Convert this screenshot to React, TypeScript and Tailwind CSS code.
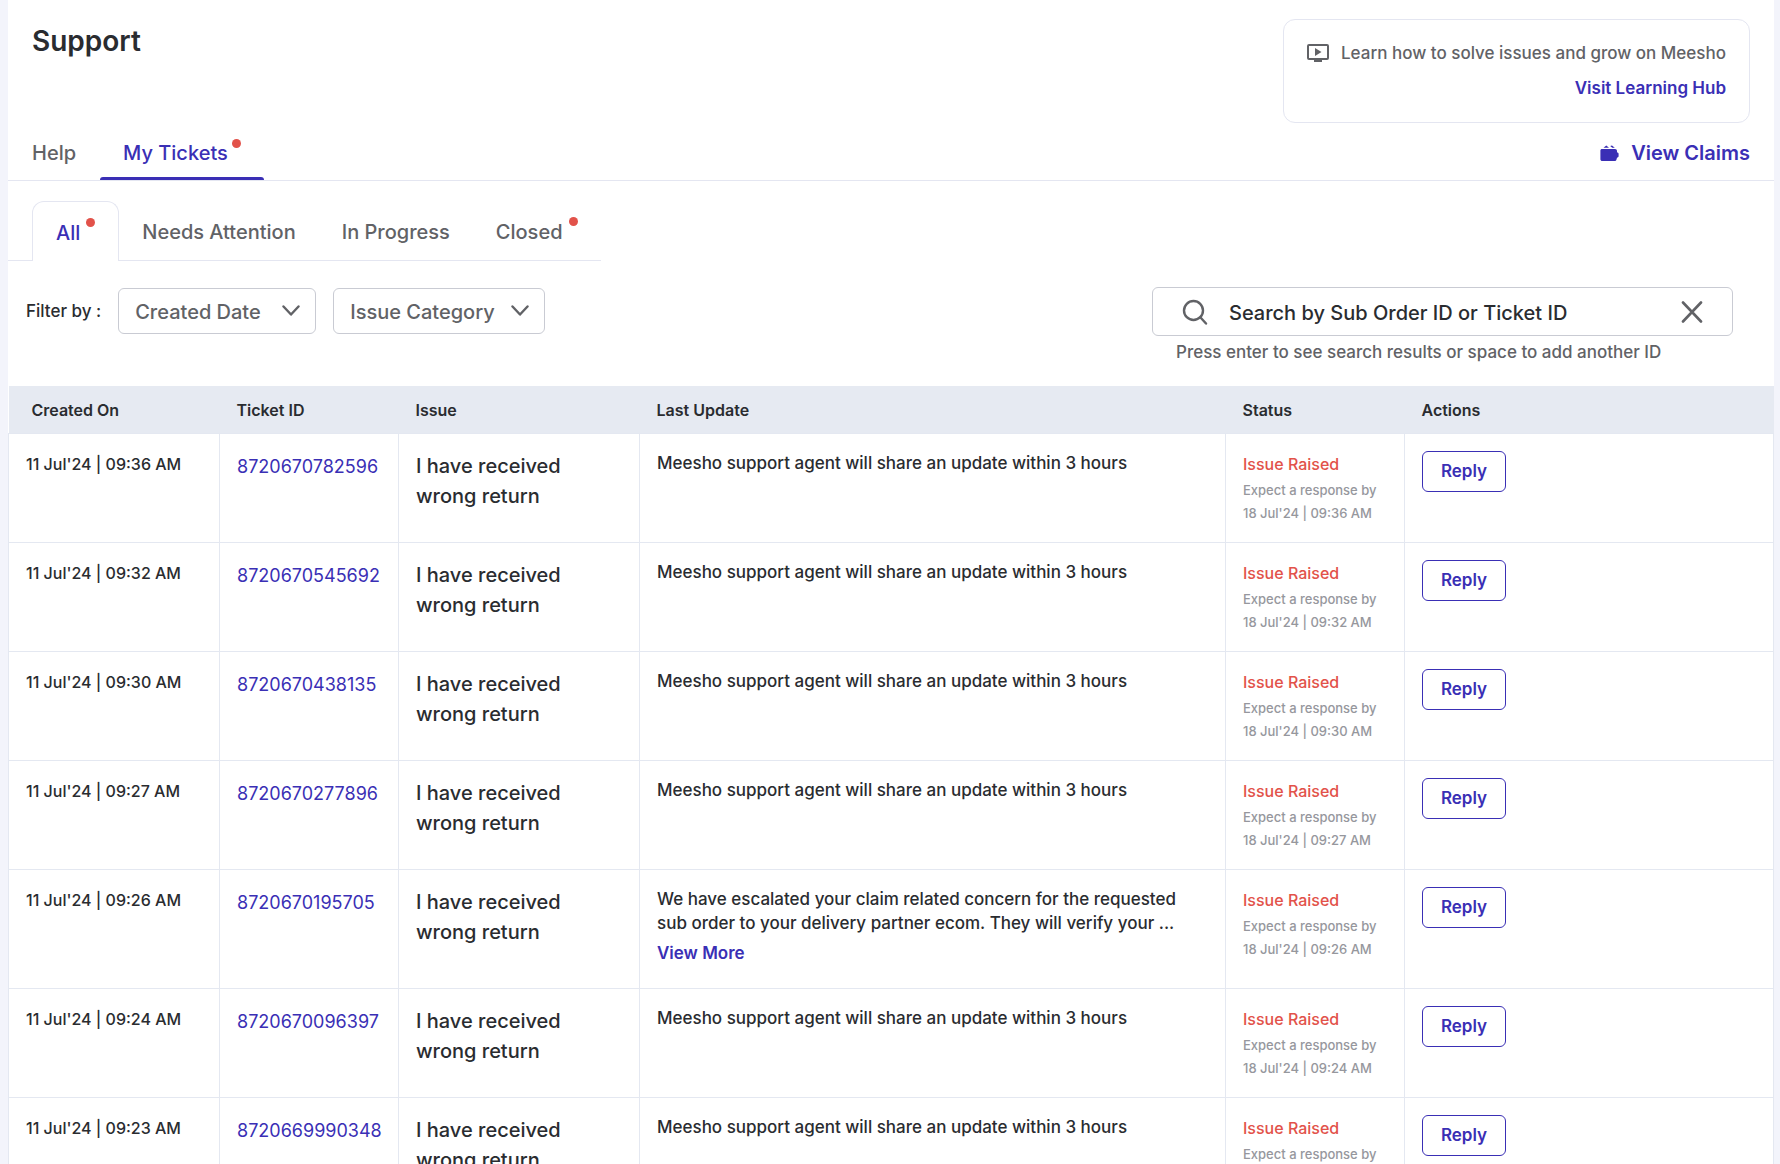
import { useState } from "react";
import clsx from "clsx";

interface Ticket {
  id: string;
  time: string;
  update?: string;
}

const tickets: Ticket[] = [
  { id: "8720670782596", time: "09:36 AM" },
  { id: "8720670545692", time: "09:32 AM" },
  { id: "8720670438135", time: "09:30 AM" },
  { id: "8720670277896", time: "09:27 AM" },
  {
    id: "8720670195705",
    time: "09:26 AM",
    update:
      "We have escalated your claim related concern for the requested sub order to your delivery partner ecom. They will verify your ...",
  },
  { id: "8720670096397", time: "09:24 AM" },
  { id: "8720669990348", time: "09:23 AM" },
];

const subTabs = [
  { label: "All", dot: true },
  { label: "Needs Attention", dot: false },
  { label: "In Progress", dot: false },
  { label: "Closed", dot: true },
];

const columns = ["Created On", "Ticket ID", "Issue", "Last Update", "Status", "Actions"];

function Dot() {
  return <span className="mb-5 h-[9px] w-[9px] rounded-full bg-[#e2524a]" />;
}

function VideoIcon() {
  return (
    <svg width="22" height="18" viewBox="0 0 22 18" fill="none" aria-hidden="true">
      <rect x="1" y="1" width="20" height="14" rx="1" stroke="#616266" strokeWidth="2" />
      <path d="M7 15.5h8V18H7z" fill="#616266" />
      <path d="M8 4v8l6.5-4z" fill="#616266" />
    </svg>
  );
}

function WalletIcon() {
  return (
    <svg width="19" height="17" viewBox="0 0 19 17" fill="#3a2fb5" aria-hidden="true">
      <path d="M3.5 2.8L6.3.5 9 2.8zM10.2 1.1L12 .5l2.8 2.3h-2.6z" />
      <path d="M2 4h13c1.200 0 2 .8 2 2v1.200l1 .5c.4.2.6.5.6 1v2.6c0 .5-.2.8-.6 1l-1 .5-.5 1.600c-.3 1.100-1 1.600-2 1.600H2.300C1.200 16 .4 15.300.4 14.200V5.600C.4 4.600 1 4 2 4z" />
    </svg>
  );
}

function FilterSelect({ label, className }: { label: string; className: string }) {
  return (
    <div className={clsx("relative", className)}>
      <select
        aria-label={label}
        className="h-[46px] w-full appearance-none rounded-md border border-[#c9cbd3] bg-white pl-4 pr-10 pt-0.5 text-[20px] font-medium text-[#616266]"
      >
        <option>{label}</option>
      </select>
      <svg
        className="pointer-events-none absolute right-4 top-[17px]"
        width="18"
        height="12"
        viewBox="0 0 18 12"
        fill="none"
        stroke="#616266"
        strokeWidth="2.4"
        strokeLinecap="round"
        strokeLinejoin="round"
        aria-hidden="true"
      >
        <path d="M1.5 1.5L9 9.5l7.5-8" />
      </svg>
    </div>
  );
}

export default function App() {
  const [subTab, setSubTab] = useState("All");
  const [query, setQuery] = useState("");

  return (
    <div className="min-h-screen bg-[#f3f4fb] pl-2 pr-1.5 font-['Inter',sans-serif] font-medium text-[#2a2c30]">
      <main className="min-h-screen bg-white">
        <header className="flex items-start justify-between px-6 pt-[19px]">
          <h1 className="mt-1 text-[28px] font-semibold leading-9">Support</h1>
          <section className="rounded-xl border border-[#e4e6f1] px-[23px] py-4">
            <p className="flex items-center gap-3 text-[17px] leading-[34px] text-[#616266]">
              <VideoIcon />
              Learn how to solve issues and grow on Meesho
            </p>
            <a href="#" className="block text-right text-[17px] font-semibold leading-9 text-[#3a2fb5]">
              Visit Learning Hub
            </a>
          </section>
        </header>

        <nav className="flex items-stretch justify-between border-b border-[#e4e6f1] pr-6">
          <div className="flex text-[20px]">
            <a href="#" className="flex h-[57px] items-center px-6 pt-[3px] text-[#616266]">
              Help
            </a>
            <a href="#" className="relative flex h-[57px] items-center gap-1 px-[23px] pt-[3px] text-[#3a2fb5]">
              My Tickets
              <Dot />
              <span className="absolute inset-x-0 bottom-0 h-[3px] rounded-t bg-[#3a2fb5]" />
            </a>
          </div>
          <a href="#" className="flex items-center gap-3 pt-[3px] text-[20px] font-semibold text-[#3a2fb5]">
            <WalletIcon />
            View Claims
          </a>
        </nav>

        <div className="mt-5 flex text-[20px]" role="tablist">
          <span className="w-6 border-b border-[#e4e6f1]" />
          {subTabs.map((tab) => (
            <button
              key={tab.label}
              type="button"
              role="tab"
              aria-selected={subTab === tab.label}
              onClick={() => setSubTab(tab.label)}
              className={clsx(
                "flex h-[60px] items-center gap-1.5 border-[#e4e6f1] px-[23px] pt-0.5",
                subTab === tab.label ? "rounded-t-xl border-x border-t text-[#3a2fb5]" : "border-b text-[#616266]"
              )}
            >
              {tab.label}
              {tab.dot && <Dot />}
            </button>
          ))}
        </div>

        <div className="mt-[26px] flex items-start justify-between pl-[18px] pr-[41px]">
          <div className="mt-px flex items-center gap-[17px]">
            <span className="pt-0.5 text-[17px]">Filter by :</span>
            <FilterSelect label="Created Date" className="w-[198px]" />
            <FilterSelect label="Issue Category" className="w-[212px]" />
          </div>
          <div className="w-[581px]">
            <div className="flex h-[49px] items-center rounded-md border border-[#c9cbd3] px-[29px]">
              <svg
                width="26"
                height="26"
                viewBox="0 0 26 26"
                fill="none"
                stroke="#616266"
                strokeWidth="2.4"
                strokeLinecap="round"
                aria-hidden="true"
              >
                <circle cx="11.5" cy="11.5" r="9.5" />
                <path d="M18.3 18.3L24 24.5" />
              </svg>
              <input
                id="ticket-search"
                placeholder="Search by Sub Order ID or Ticket ID"
                value={query}
                onChange={(e) => setQuery(e.target.value)}
                className="ml-[21px] min-w-0 flex-1 pt-0.5 text-[20px] outline-none placeholder:text-[#2a2c30]"
              />
              <button type="button" aria-label="Clear search" onClick={() => setQuery("")}>
                <svg
                  width="22"
                  height="22"
                  viewBox="0 0 22 22"
                  fill="none"
                  stroke="#616266"
                  strokeWidth="2.6"
                  strokeLinecap="round"
                  aria-hidden="true"
                >
                  <path d="M2 1.5l18 19M20 1.5l-18 19" />
                </svg>
              </button>
            </div>
            <label htmlFor="ticket-search" className="mt-1 block pl-6 text-[17px] leading-6 text-[#616266]">
              Press enter to see search results or space to add another ID
            </label>
          </div>
        </div>

        <table className="mt-[22px] w-full table-fixed border-collapse">
          <colgroup>
            <col className="w-[211px]" />
            <col className="w-[179px]" />
            <col className="w-[241px]" />
            <col className="w-[586px]" />
            <col className="w-[179px]" />
            <col />
          </colgroup>
          <thead>
            <tr className="h-[47px] bg-[#e6eaf2] text-left text-[16px]">
              {columns.map((name, i) => (
                <th key={name} className={clsx("pt-0.5 font-semibold", i === 0 ? "pl-[23px]" : "pl-[17px]")}>
                  {name}
                </th>
              ))}
            </tr>
          </thead>
          <tbody className="align-top">
            {tickets.map((ticket) => (
              <tr key={ticket.id} className="h-[109px] *:border *:border-[#e4e8f1] *:px-[17px] *:pt-[17px]">
                <td className="text-[16px] leading-[26px]">11 Jul'24 | {ticket.time}</td>
                <td className="text-[18px] font-normal leading-8">
                  <a href="#" className="text-[#3a2fb5]">
                    {ticket.id}
                  </a>
                </td>
                <td className="text-[20px] leading-[30px]">
                  I have received
                  <br />
                  wrong return
                </td>
                <td className="text-[17px] leading-6">
                  <p className="max-w-[530px]">
                    {ticket.update ?? "Meesho support agent will share an update within 3 hours"}
                  </p>
                  {ticket.update && (
                    <button type="button" className="mb-[23px] mt-1.5 block font-semibold text-[#3a2fb5]">
                      View More
                    </button>
                  )}
                </td>
                <td>
                  <p className="text-[16px] leading-[26px] text-[#e2524a]">Issue Raised</p>
                  <p className="mt-0.5 text-[13px] leading-[23px] text-[#96979d]">
                    Expect a response by
                    <br />
                    18 Jul'24 | {ticket.time}
                  </p>
                </td>
                <td>
                  <button
                    type="button"
                    className="h-[41px] w-[84px] rounded-md border border-[#3a2fb5] pt-0.5 text-[17px] font-semibold text-[#3a2fb5]"
                  >
                    Reply
                  </button>
                </td>
              </tr>
            ))}
          </tbody>
        </table>
      </main>
    </div>
  );
}
